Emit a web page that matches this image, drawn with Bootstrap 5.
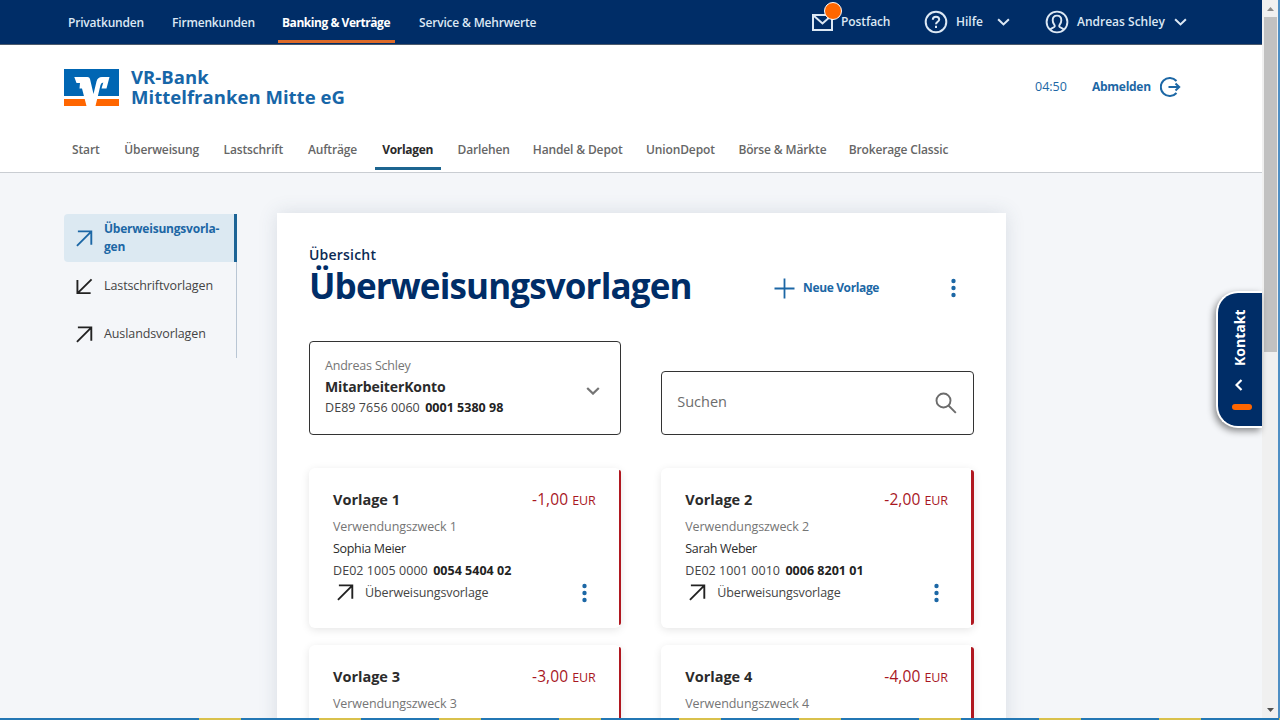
<!DOCTYPE html>
<html lang="de">
<head>
<meta charset="utf-8">
<meta name="viewport" content="width=device-width, initial-scale=1">
<title>Überweisungsvorlagen</title>
<link href="https://cdn.jsdelivr.net/npm/bootstrap@5.3.0/dist/css/bootstrap.min.css" rel="stylesheet">
<script src="https://cdn.jsdelivr.net/npm/bootstrap@5.3.0/dist/js/bootstrap.bundle.min.js"></script>
<style>
:root{--navy:#002d67;--blue:#1c67a5;--orange:#ff6600;--ink:#2b2b2b;--grey:#757575}
body{font-family:"Open Sans","Noto Sans",sans-serif;width:1280px;height:720px;overflow:hidden;background:#f4f6f9;color:var(--ink);font-size:12.5px}
svg{display:block;flex:none;fill:none;stroke:currentColor}
a{color:inherit;text-decoration:none;white-space:nowrap}
.page-col{width:1262px;height:718px}
.topbar{height:45px;background:var(--navy);border-bottom:1px solid #4c5a6c;color:#dce8f4;padding:0 75px 0 68px;font-size:12px;font-weight:600}
.topnav{display:grid;grid-template-columns:76px 82px 109px 118px;column-gap:28px;line-height:45px;height:44px;letter-spacing:-.18px}
.topnav .active{color:#fff;box-shadow:inset 0 -3px 0 #dd6a28;margin:0 -4px -1px;padding:0 4px;height:43px;letter-spacing:-.46px;font-weight:700}
.tool-mail{width:108px;letter-spacing:-.1px}
.tool-help{width:121px}
.postdot{width:18px;height:18px;background:var(--orange);border:1.5px solid #fff;left:12px;top:-11px}
.head{height:128px;background:#fff;border-bottom:1px solid #c9cdd2}
.headrow{height:84px;padding:0 81px 0 64px}
.brandtext{font-size:18.5px;font-weight:700;line-height:20.5px;color:#1766a8;letter-spacing:.03px}
.subnav{display:grid;grid-template-columns:28px 75px 60px 49px 52px 51px 89px 68px 86px 101px;column-gap:24.3px;padding-left:72px;font-size:12px;font-weight:600;color:#666;line-height:42px;height:41px;letter-spacing:-.14px}
.subnav .active{color:#2a2a2a;font-weight:700;border-bottom:3px solid #1d6590;margin:0 -8px 0 -6px;padding:0 7px;height:41px;letter-spacing:-.3px}
.logout{font-size:12px;color:var(--blue)}
.timer{width:57px;font-size:12.5px}
.sidebar{width:173px;margin:41px 40px 0 64px}
.sideitem{height:48px;padding-left:12px;gap:11px;border-right:1px solid #b9c6d4;font-size:12.5px;line-height:18px;color:#444;letter-spacing:-.1px}
.sideitem svg{color:#222}
.sideitem.active{background:#dce9f2;color:var(--blue);border-right:3px solid #1c6496;border-radius:4px 0 0 4px;font-weight:700;font-size:12px;letter-spacing:-.22px}
.sideitem.active svg{color:var(--blue)}
.panel{width:729px;height:600px;margin-top:40px;padding:32px 32.5px 0 32px;background:#fff;box-shadow:0 0 18px rgba(60,80,110,.15)}
.kicker{font-size:14px;font-weight:600;line-height:20px;color:#0b2a54;letter-spacing:.2px}
.headline{font-size:35px;font-weight:700;line-height:42px;color:var(--navy);letter-spacing:-.86px;width:465px}
.newlink{color:var(--blue);font-size:12px;font-weight:700;letter-spacing:-.36px}
.headkebab{margin-right:17.5px}
.kebab{color:#1c67a5;fill:currentColor;stroke:none}
.field{border:1px solid #333;border-radius:4px;background:#fff}
.row.pair{--bs-gutter-x:40px}
.account{height:94px;padding:13px 20px 0 15px;line-height:21px}
.account .name{font-size:14px;font-weight:700;letter-spacing:-.12px}
.iban{color:#444;letter-spacing:.06px}
.iban b{color:#222;margin-left:2px;letter-spacing:.02px}
.soft{color:var(--grey);letter-spacing:-.08px}
.account .soft{letter-spacing:-.2px}
.search{height:64px;padding:0 16px 0 15px;font-size:14.5px;color:#6c6c6c}
.search span{margin-top:-2px}
.vcard{height:160px;margin-bottom:17px;padding:18px 25.500px 0 24px;border-radius:6px;background:#fff;box-shadow:0 2px 9px rgba(0,0,0,.1);line-height:22px;position:relative}
.vcard::after{content:"";position:absolute;right:0;top:2px;bottom:3px;width:2.5px;background:#b01820;border-radius:0 3px 3px 0}
.vtitle{font-size:14.5px;font-weight:700;line-height:27px;margin-bottom:2px}
.amount{font-size:15.5px;font-weight:400;color:#a8171f;letter-spacing:.1px}
.amount small{font-size:12.5px;letter-spacing:-.1px}
.who{letter-spacing:-.32px}
.kind{height:21px;color:#444;gap:7px;padding-right:5px;letter-spacing:-.12px}
.kind svg:first-child{color:#222}
.contact{position:absolute;left:1216px;top:291px;width:46px;height:137px;background:var(--navy);border:2px solid #fff;border-right:0;border-radius:22px 0 0 22px;color:#fff;box-shadow:-2px 3px 7px rgba(0,0,0,.45);padding-top:16px}
.contact .word{writing-mode:vertical-rl;transform:rotate(180deg);font-size:14px;font-weight:700;line-height:20px;height:57px;white-space:nowrap}
.contact svg{margin:12px 2px 0 0}
.contact .dash{width:20px;height:6px;border-radius:3px;background:var(--orange);margin:12px 0 0 3px}
.scroller{width:16px;height:718px;background:#f0f0f0;padding:0 1px 0 2px}
.thumb{height:335px;background:#c1c1c1}
.edge{width:2px;height:718px;background:#4f8fc4}
.taskedge{height:2px;background:repeating-linear-gradient(90deg,#d9c14c 0 42px,#2377b4 42px 120px)}
.plainedge{width:199px;height:2px;background:#2377b4}
</style>
</head>
<body>
<svg class="d-none">
  <symbol id="up" viewBox="0 0 18 18"><path d="M2 1.5H16.2V15.500M15.800 2 1 16.800" stroke-width="2"/></symbol>
  <symbol id="down" viewBox="0 0 18 18"><path d="M1.500 2V16H15.500M2 15.800 16.500 1.500" stroke-width="2"/></symbol>
  <symbol id="chev" viewBox="0 0 14 8"><path d="M1.200 1 7 6.600 12.800 1" stroke-width="2.200"/></symbol>
  <symbol id="dots" viewBox="0 0 5 20"><circle cx="2.500" cy="3" r="2.200"/><circle cx="2.500" cy="10" r="2.200"/><circle cx="2.500" cy="17" r="2.200"/></symbol>
</svg>
<div class="d-flex">
  <div class="page-col overflow-hidden">
    <div class="topbar d-flex justify-content-between">
      <nav class="topnav"><a href="#">Privatkunden</a><a href="#">Firmenkunden</a><a href="#" class="active">Banking &amp; Verträge</a><a href="#">Service &amp; Mehrwerte</a></nav>
      <div class="d-flex align-items-center">
        <a href="#" class="tool-mail d-flex align-items-center position-relative me-1">
          <svg width="21" height="17" viewBox="0 0 21 17" stroke-width="2"><path d="M1 1H20V16H1ZM1.500 1.500 10.500 9.500 19.500 1.500"/></svg>
          <span class="postdot position-absolute rounded-circle"></span><span class="ps-2 ms-0">Postfach</span>
        </a>
        <a href="#" class="tool-help d-flex align-items-center">
          <svg width="24" height="24" viewBox="0 0 24 24" stroke-width="2"><circle cx="12" cy="12" r="10.300"/><path d="M8.800 9.700C8.800 7.700 10.100 6.700 12 6.700s3.200 1.100 3.200 2.800c0 2.300-3.200 2.300-3.200 4.800"/><path d="M12 15.700v2.200"/></svg>
          <span class="ms-2" style="width:41px">Hilfe</span><svg width="13" height="8"><use href="#chev"/></svg>
        </a>
        <a href="#" class="d-flex align-items-center">
          <svg width="24" height="24" viewBox="0 0 24 24" stroke-width="1.900"><circle cx="12" cy="12" r="10.400"/><path d="M5.200 19.600C6.300 18 9.800 17.700 9.800 16.200 9.800 14.600 7.700 13.600 7.700 10.200 7.700 7.400 9.400 5.600 12 5.600s4.300 1.800 4.300 4.600c0 3.400-2.100 4.400-2.100 6 0 1.500 3.500 1.800 4.600 3.400"/></svg>
          <span class="ms-2" style="width:97px">Andreas Schley</span><svg width="13" height="8"><use href="#chev"/></svg>
        </a>
      </div>
    </div>
    <header class="head">
      <div class="headrow d-flex align-items-center justify-content-between">
        <div class="d-flex align-items-center">
          <svg width="55" height="37" viewBox="0 0 55 37"><g stroke="none"><path fill="#0066b3" d="M0 0H55V27H0Z"/><path fill="#ff6600" d="M0 30H55V37H0Z"/><path fill="#fff" d="M10.300 8H23.500Q25.500 8 26 10L29.500 25 32.500 12.500Q33.500 8 38 8H45.500L42.500 19.500H37.500L39.300 13.500Q37 13.500 36.500 16L31.500 37H22.500L18 19.500H15.500L16 14H12.500Z"/></g></svg>
          <div class="brandtext ms-2 ps-1"><div>VR-Bank</div><div>Mittelfranken Mitte eG</div></div>
        </div>
        <div class="logout d-flex align-items-center"><span class="timer">04:50</span><a href="#" class="fw-bold d-flex align-items-center"><span style="width:68px;letter-spacing:-.28px">Abmelden</span><svg width="21" height="20" viewBox="0 0 21 20" stroke-width="2"><path d="M16.500 4A9 9 0 1 0 16.500 16M8.500 10H19.500M15.500 6.500 19.200 10 15.500 13.500"/></svg></a></div>
      </div>
      <nav class="subnav"><a href="#">Start</a><a href="#">Überweisung</a><a href="#">Lastschrift</a><a href="#">Aufträge</a><a href="#" class="active">Vorlagen</a><a href="#">Darlehen</a><a href="#">Handel &amp; Depot</a><a href="#">UnionDepot</a><a href="#">Börse &amp; Märkte</a><a href="#">Brokerage Classic</a></nav>
    </header>
    <div class="d-flex align-items-start">
      <aside class="sidebar">
        <a href="#" class="sideitem active d-flex align-items-center"><svg width="17" height="17"><use href="#up"/></svg><span>Überweisungsvorla-<br>gen</span></a>
        <a href="#" class="sideitem d-flex align-items-center"><svg width="17" height="17"><use href="#down"/></svg><span>Lastschriftvorlagen</span></a>
        <a href="#" class="sideitem d-flex align-items-center"><svg width="17" height="17"><use href="#up"/></svg><span>Auslandsvorlagen</span></a>
      </aside>
      <main class="panel">
        <div class="kicker">Übersicht</div>
        <div class="d-flex align-items-center">
          <h1 class="headline m-0">Überweisungsvorlagen</h1>
          <a href="#" class="newlink d-flex align-items-center flex-grow-1 mt-1"><svg width="21" height="21" viewBox="0 0 21 21" stroke-width="1.800"><path d="M10.500 .5V20.500M.5 10.500H20.500"/></svg><span class="ms-2 ps-0">Neue Vorlage</span></a>
          <svg class="kebab headkebab mt-1" width="5" height="20"><use href="#dots"/></svg>
        </div>
        <div class="row pair align-items-end" style="margin-top:34px;margin-bottom:33px">
          <div class="col-6"><div class="field account d-flex justify-content-between">
            <div><div class="soft">Andreas Schley</div><div class="name">MitarbeiterKonto</div><div class="iban">DE89 7656 0060 <b>0001 5380 98</b></div></div>
            <svg class="soft align-self-center mb-2" width="14" height="8"><use href="#chev"/></svg></div></div>
          <div class="col-6"><div class="field search d-flex align-items-center justify-content-between"><span>Suchen</span><svg width="22" height="22" viewBox="0 0 22 22" stroke-width="1.900"><circle cx="8.500" cy="8.500" r="7"/><path d="M13.500 13.500 20.800 20.800"/></svg></div></div>
        </div>
        <div class="row pair">
          <div class="col-6"><article class="vcard">
            <div class="vtitle d-flex justify-content-between"><span>Vorlage 1</span><span class="amount">-1,00 <small>EUR</small></span></div>
            <div class="soft">Verwendungszweck 1</div><div class="who">Sophia Meier</div><div class="iban">DE02 1005 0000 <b>0054 5404 02</b></div>
            <div class="kind d-flex align-items-center ps-1"><svg width="17" height="17"><use href="#up"/></svg><span class="ps-1 flex-grow-1">Überweisungsvorlage</span><svg class="kebab me-1" width="5" height="20"><use href="#dots"/></svg></div>
          </article></div>
          <div class="col-6"><article class="vcard">
            <div class="vtitle d-flex justify-content-between"><span>Vorlage 2</span><span class="amount">-2,00 <small>EUR</small></span></div>
            <div class="soft">Verwendungszweck 2</div><div class="who">Sarah Weber</div><div class="iban">DE02 1001 0010 <b>0006 8201 01</b></div>
            <div class="kind d-flex align-items-center ps-1"><svg width="17" height="17"><use href="#up"/></svg><span class="ps-1 flex-grow-1">Überweisungsvorlage</span><svg class="kebab me-1" width="5" height="20"><use href="#dots"/></svg></div>
          </article></div>
          <div class="col-6"><article class="vcard">
            <div class="vtitle d-flex justify-content-between"><span>Vorlage 3</span><span class="amount">-3,00 <small>EUR</small></span></div>
            <div class="soft">Verwendungszweck 3</div>
          </article></div>
          <div class="col-6"><article class="vcard">
            <div class="vtitle d-flex justify-content-between"><span>Vorlage 4</span><span class="amount">-4,00 <small>EUR</small></span></div>
            <div class="soft">Verwendungszweck 4</div>
          </article></div>
        </div>
      </main>
    </div>
  </div>
  <div class="scroller d-flex flex-column">
    <svg width="13" height="17" viewBox="0 0 13 17"><path fill="#8a8a8a" stroke="none" d="M3 11 6.500 7 10 11Z"/></svg>
    <div class="thumb"></div>
    <svg class="mt-auto" width="13" height="17" viewBox="0 0 13 17"><path fill="#505050" stroke="none" d="M3 7 6.500 11 10 7Z"/></svg>
  </div>
  <div class="edge"></div>
</div>
<div class="d-flex"><div class="plainedge"></div><div class="taskedge flex-grow-1"></div></div>
<a href="#" class="contact d-flex flex-column align-items-center"><span class="word">Kontakt</span><svg width="8" height="14" viewBox="0 0 8 14"><path d="M6.500 2 1.500 7 6.500 12" stroke-width="2.200"/></svg><span class="dash"></span></a>
</body>
</html>
